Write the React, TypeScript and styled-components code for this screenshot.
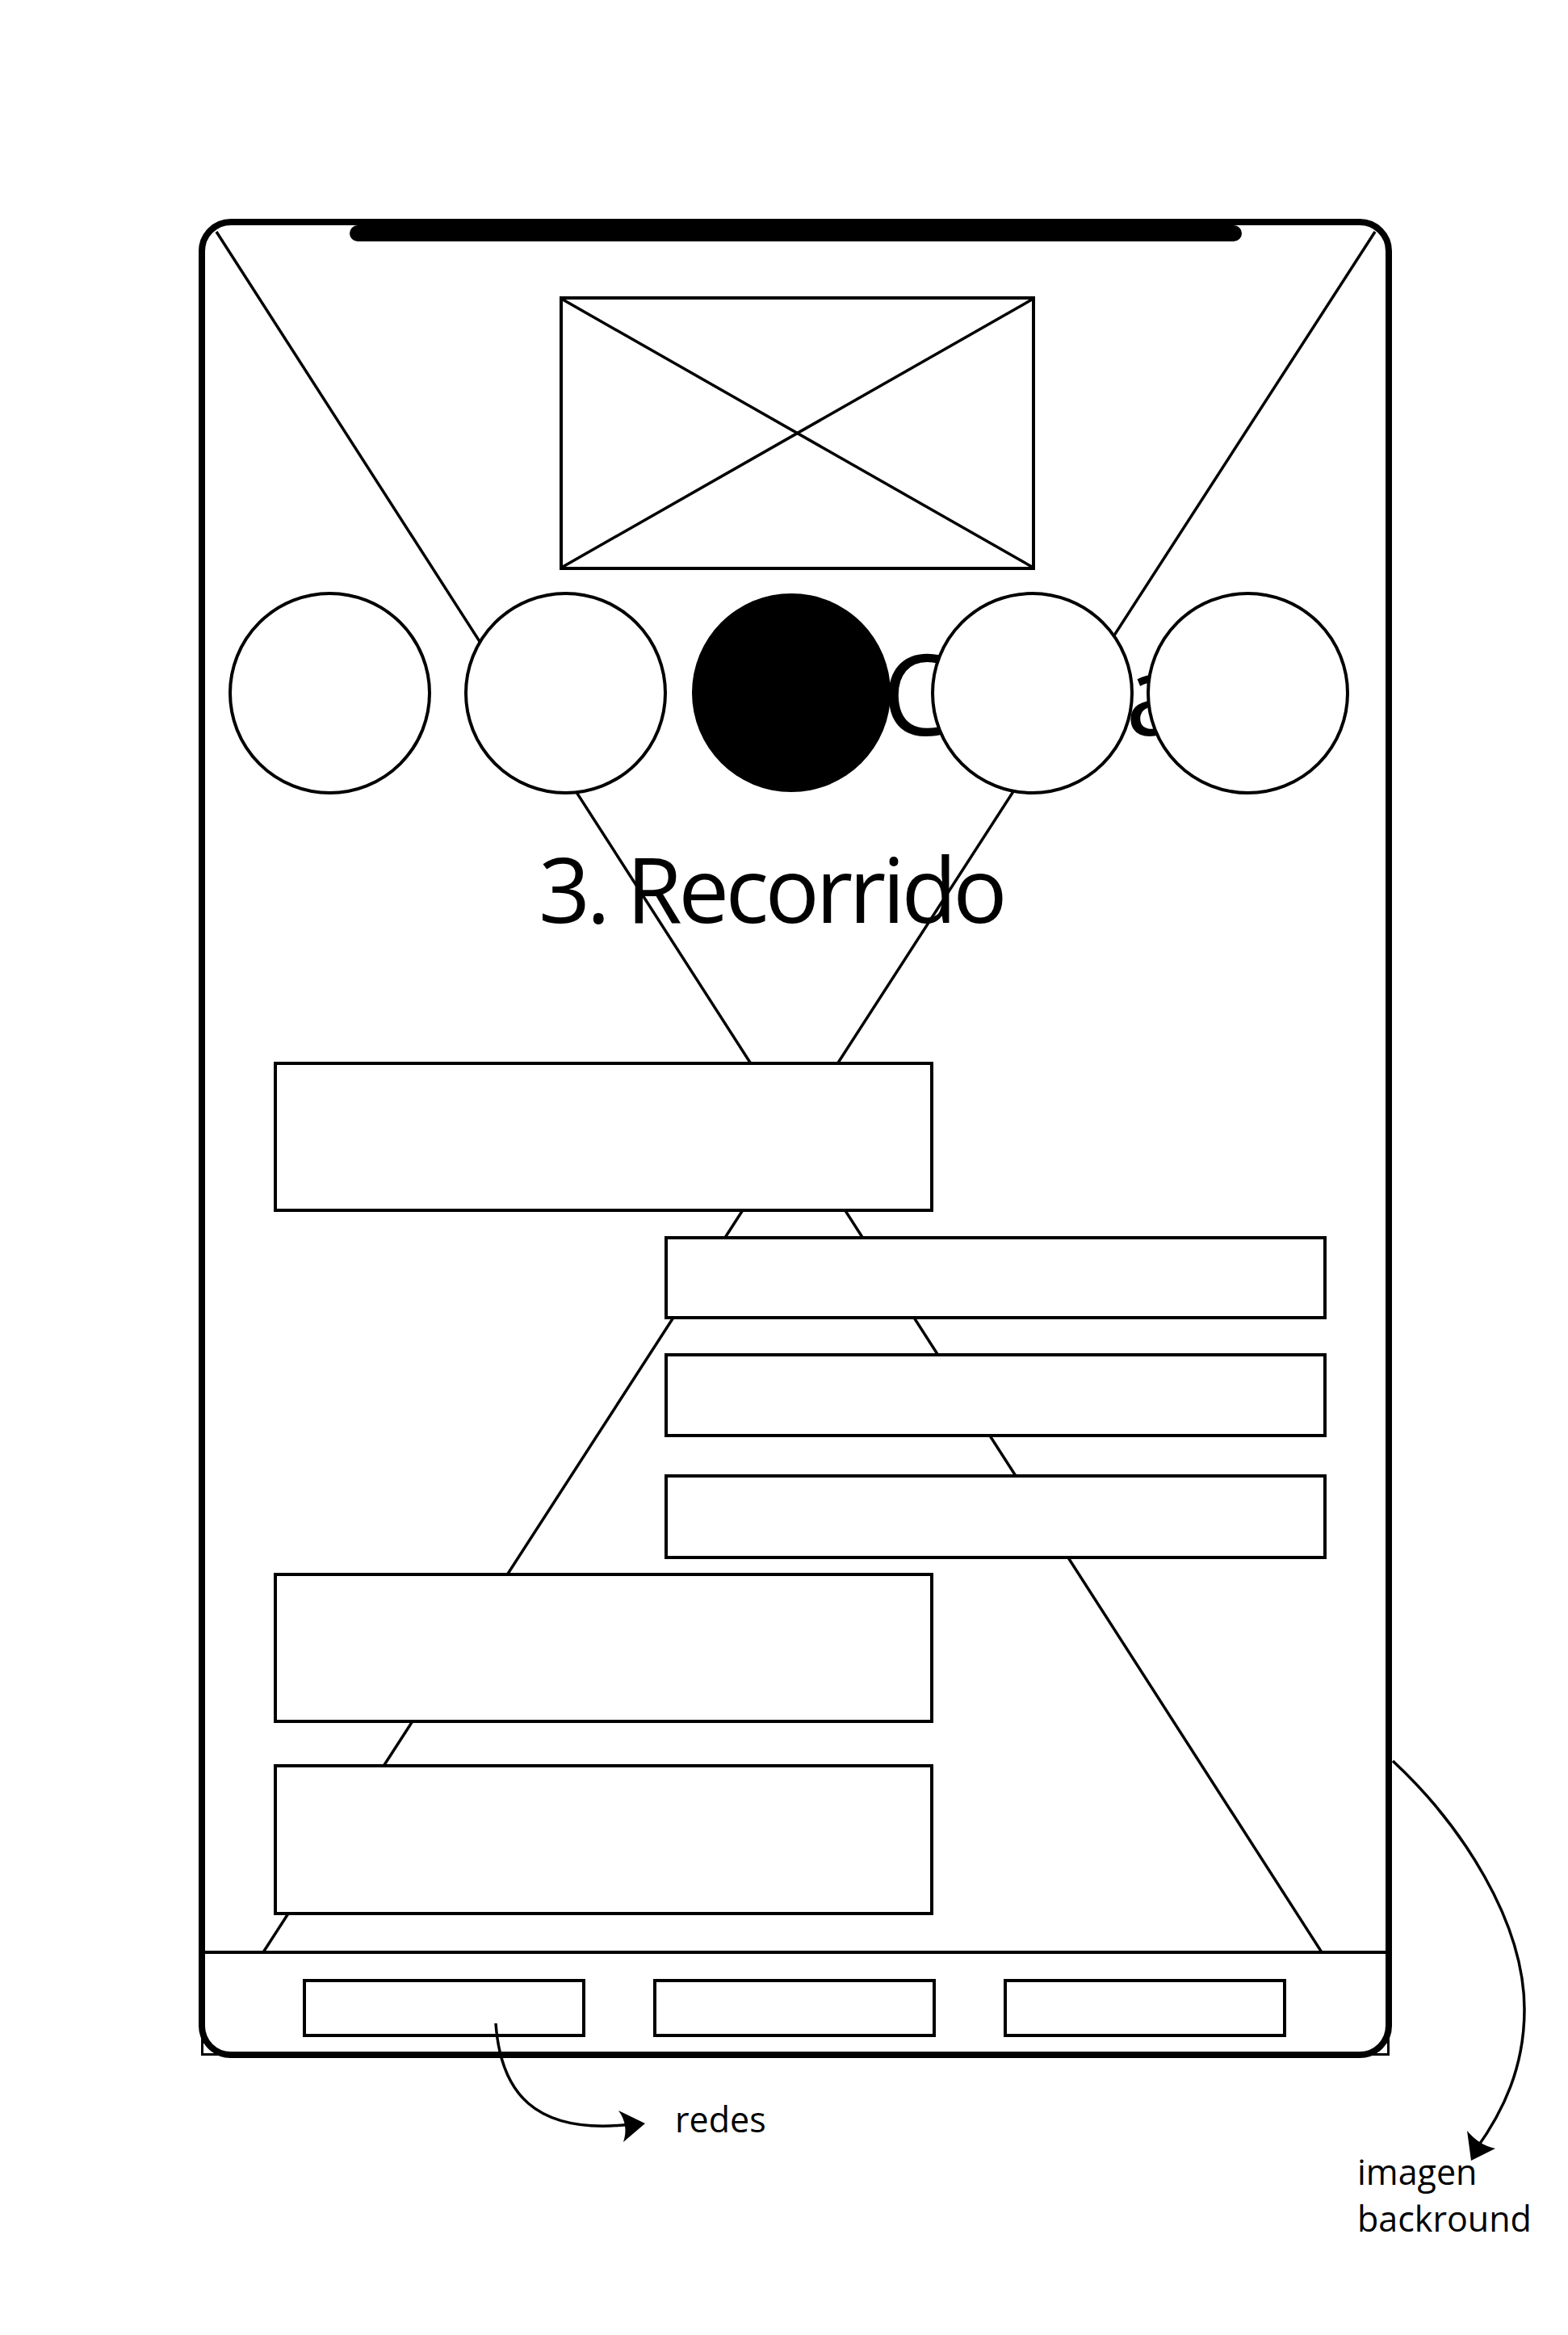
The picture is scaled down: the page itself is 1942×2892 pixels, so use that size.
import React from "react";
import styled, { createGlobalStyle } from "styled-components";

const GlobalStyle = createGlobalStyle`
  html, body { margin: 0; padding: 0; background: #fff; }
  body { font-family: "Open Sans", "Liberation Sans", sans-serif; color: #000; }
  * { box-sizing: border-box; }
`;

const Page = styled.div`
  position: relative;
  width: 1942px;
  height: 2892px;
  padding: 271px 0 0 246px;
  overflow: hidden;
  background: #fff;
`;

const Frame = styled.div`
  width: 1478px;
  height: 2278px;
  border: 8px solid #000;
  border-radius: 40px;
  display: flex;
  flex-direction: column;
  background: #fff;
`;

const Stage = styled.section`
  position: relative;
  display: flex;
  flex-direction: column;
  padding-bottom: 44px;
  & > *:not(svg) { position: relative; z-index: 1; }
`;

const Backdrop = styled.svg`
  position: absolute;
  inset: 0;
  width: 100%;
  height: 100%;
  z-index: 0;
`;

const Notch = styled.div`
  width: 1105px;
  height: 20px;
  margin: 0 auto;
  background: #000;
  border-radius: 10px;
`;

const Placeholder = styled.div`
  margin: 68px 0 0 439px;
  width: 589px;
  height: 339px;
  border: 4px solid #000;
  background: #fff;
  svg { display: block; width: 100%; height: 100%; }
`;

const CircleRow = styled.div`
  margin-top: 26px;
  height: 252px;
  display: flex;
  align-items: center;
  padding-left: 29px;
`;

const BigWord = styled.span`
  position: absolute;
  left: 838px;
  top: 55px;
  font-size: 140px;
  line-height: 140px;
  white-space: nowrap;
  z-index: 1;
`;

const Dot = styled.div<{ $filled?: boolean; $offset: number }>`
  position: relative;
  z-index: 2;
  flex-shrink: 0;
  margin-left: ${(p) => p.$offset}px;
  width: ${(p) => (p.$filled ? 246 : 251)}px;
  height: ${(p) => (p.$filled ? 246 : 251)}px;
  border-radius: 50%;
  border: ${(p) => (p.$filled ? "none" : "4px solid #000")};
  background: ${(p) => (p.$filled ? "#000" : "#fff")};
`;

const Heading = styled.h1`
  margin: 60px 0 0;
  padding-left: 413px;
  font-size: 112px;
  line-height: 112px;
  font-weight: 400;
  letter-spacing: -4.6px;
  white-space: nowrap;
`;

const Panel = styled.div<{ $side: "left" | "right"; $gap: number; $h: number }>`
  margin-top: ${(p) => p.$gap}px;
  margin-left: ${(p) => (p.$side === "left" ? 85 : 569)}px;
  width: ${(p) => (p.$side === "left" ? 817 : 820)}px;
  height: ${(p) => p.$h}px;
  border: 4px solid #000;
  background: #fff;
`;

const Footer = styled.footer`
  margin: 0 -5px -5px;
  height: 130px;
  border: 3px solid #000;
  border-top-width: 4px;
  display: flex;
  gap: 84px;
  padding: 31px 0 0 123px;
`;

const FooterButton = styled.div`
  width: 350px;
  height: 72px;
  border: 4px solid #000;
  background: #fff;
`;

const Notes = styled.svg`
  position: absolute;
  inset: 0;
  width: 1942px;
  height: 2892px;
  pointer-events: none;
  z-index: 3;
`;

const Label = styled.div<{ $x: number; $y: number }>`
  position: absolute;
  left: ${(p) => p.$x}px;
  top: ${(p) => p.$y}px;
  font-size: 43px;
  line-height: 58px;
  white-space: nowrap;
  z-index: 4;
`;

const panels: { side: "left" | "right"; gap: number; h: number }[] = [
  { side: "left", gap: 159, h: 186 },
  { side: "right", gap: 30, h: 103 },
  { side: "right", gap: 42, h: 104 },
  { side: "right", gap: 46, h: 105 },
  { side: "left", gap: 17, h: 186 },
  { side: "left", gap: 51, h: 187 },
];

const dots = [
  { offset: 0 },
  { offset: 41 },
  { offset: 31, filled: true },
  { offset: 50 },
  { offset: 16 },
];

export default function App() {
  return (
    <>
      <GlobalStyle />
      <Page>
        <Frame>
          <Stage>
            <Backdrop viewBox="0 0 1462 2137" preserveAspectRatio="none">
              <line x1="14" y1="8" x2="1383" y2="2139" stroke="#000" strokeWidth="3.5" />
              <line x1="1449" y1="8" x2="72" y2="2139" stroke="#000" strokeWidth="3.5" />
            </Backdrop>
            <Notch />
            <Placeholder>
              <svg viewBox="0 0 100 100" preserveAspectRatio="none">
                <line x1="0" y1="0" x2="100" y2="100" stroke="#000" strokeWidth="3.5" vectorEffect="non-scaling-stroke" />
                <line x1="100" y1="0" x2="0" y2="100" stroke="#000" strokeWidth="3.5" vectorEffect="non-scaling-stroke" />
              </svg>
            </Placeholder>
            <CircleRow>
              <BigWord>Coma</BigWord>
              {dots.map((d, i) => (
                <Dot key={i} $offset={d.offset} $filled={d.filled} />
              ))}
            </CircleRow>
            <Heading>3. Recorrido</Heading>
            {panels.map((p, i) => (
              <Panel key={i} $side={p.side} $gap={p.gap} $h={p.h} />
            ))}
          </Stage>
          <Footer>
            <FooterButton />
            <FooterButton />
            <FooterButton />
          </Footer>
        </Frame>
        <Notes viewBox="0 0 1942 2892">
          <path d="M614 2506 C620 2590 660 2645 782 2631" fill="none" stroke="#000" strokeWidth="3.5" />
          <path d="M799 2630 L766 2614 Q779 2632 772 2653 Z" fill="#000" />
          <path
            d="M1725 2181 C1810 2260 1888 2380 1888 2489 C1888 2560 1862 2615 1828 2662"
            fill="none"
            stroke="#000"
            strokeWidth="3.5"
          />
          <path d="M1822 2676 L1817 2639 Q1832 2657 1852 2661 Z" fill="#000" />
        </Notes>
        <Label $x={836} $y={2596}>redes</Label>
        <Label $x={1681} $y={2661}>
          imagen
          <br />
          backround
        </Label>
      </Page>
    </>
  );
}
